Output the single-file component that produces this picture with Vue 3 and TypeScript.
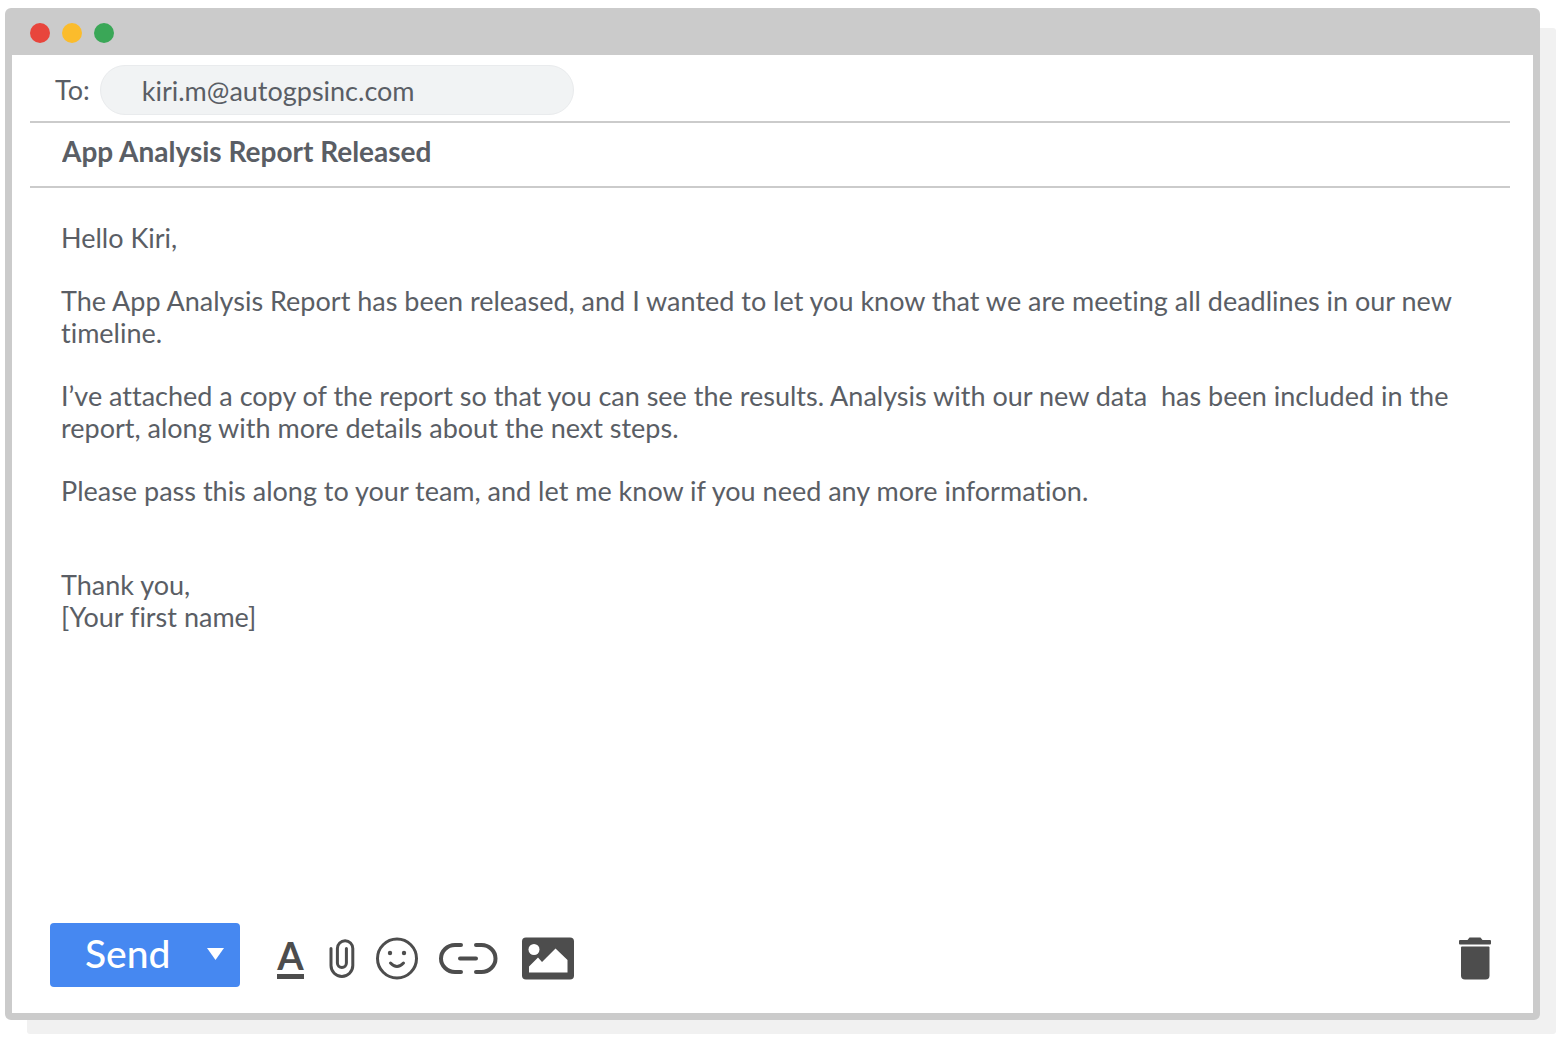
<script setup lang="ts">
import { ref } from 'vue'

const recipient = ref('kiri.m@autogpsinc.com')
const subject = ref('App Analysis Report Released')

const paragraphs: string[] = [
  'Hello Kiri,',
  'The App Analysis Report has been released, and I wanted to let you know that we are meeting all deadlines in our new timeline.',
  'I’ve attached a copy of the report so that you can see the results. Analysis with our new data\u00a0 has been included in the report, along with more details about the next steps.',
  'Please pass this along to your team, and let me know if you need any more information.',
]
</script>

<template>
  <main class="page">
    <form class="window" @submit.prevent>
      <header class="titlebar">
        <span class="dot red"></span>
        <span class="dot yellow"></span>
        <span class="dot green"></span>
      </header>

      <div class="row to-row">
        <label for="to">To:</label>
        <input id="to" v-model="recipient" class="recipient" type="text" />
      </div>
      <div class="row subject-row">
        <input v-model="subject" class="subject" type="text" aria-label="Subject" />
      </div>

      <div class="message" contenteditable="true" role="textbox" aria-multiline="true" aria-label="Message" spellcheck="false">
        <p v-for="text in paragraphs" :key="text">{{ text }}</p>
        <p class="signature">Thank you,<br />[Your first name]</p>
      </div>

      <footer class="toolbar">
        <div class="send-group">
          <button class="send" type="submit">Send</button>
          <button class="more" type="button" aria-label="More send options">
            <svg width="17" height="12" viewBox="0 0 17 12"><path d="M0 0H17L8.500 12Z" fill="#fff" /></svg>
          </button>
        </div>
        <div class="tools">
          <button class="tool format" type="button" aria-label="Formatting options"><span>A</span></button>
          <button class="tool" type="button" aria-label="Attach files">
            <svg width="30" height="44" viewBox="-4 0 30 44" fill="none" stroke="#4d4d4d" stroke-width="3" stroke-linecap="round">
              <path d="M2 11.500V28.500A10.900 10.900 0 0 0 23.800 28.500V11.500A7.700 7.700 0 0 0 8.400 11.500V26A4.500 4.500 0 0 0 17.400 26V11.500" />
            </svg>
          </button>
          <button class="tool" type="button" aria-label="Insert emoji">
            <svg width="44" height="44" viewBox="0 0 44 44" fill="none" stroke="#4d4d4d" stroke-width="3" stroke-linecap="round">
              <circle cx="22" cy="21.500" r="19.500" />
              <path d="M15.500 26Q22 33 28.500 26" />
              <circle cx="15" cy="16" r="2.200" fill="#4d4d4d" stroke="none" />
              <circle cx="29" cy="16" r="2.200" fill="#4d4d4d" stroke="none" />
            </svg>
          </button>
          <button class="tool" type="button" aria-label="Insert link">
            <svg width="59" height="44" viewBox="1 0 59 44" fill="none" stroke="#4d4d4d" stroke-width="4" stroke-linecap="round">
              <path d="M23 8H17A14 13.500 0 0 0 17 35H23M38 8H43.500A14 13.500 0 0 1 43.500 35H38M22 21.500H38" />
            </svg>
          </button>
          <button class="tool" type="button" aria-label="Insert photo">
            <svg width="57" height="44" viewBox="-3 0 57 44">
              <rect x="1" y="0.500" width="52" height="42" rx="4" fill="#4d4d4d" />
              <circle cx="13" cy="12.500" r="5.500" fill="#fff" />
              <path d="M8 35.500V29.500L17 20.500L21 25L34.500 11.500L46.500 23V35.500Z" fill="#fff" />
            </svg>
          </button>
        </div>
        <button class="tool trash" type="button" aria-label="Discard draft">
          <svg width="34" height="44" viewBox="0 0 34 44" fill="#4d4d4d">
            <path d="M2 3H9.500L11.500 0.500H22.500L24.500 3H32A1 1 0 0 1 33 4V6.500A1 1 0 0 1 32 7.500H2A1 1 0 0 1 1 6.500V4A1 1 0 0 1 2 3Z" />
            <path d="M4 9.500H30.500A1 1 0 0 1 31.500 10.500V38.500A4 4 0 0 1 27.500 42.500H7A4 4 0 0 1 3 38.500V10.500A1 1 0 0 1 4 9.500Z" />
          </svg>
        </button>
      </footer>
    </form>
  </main>
</template>

<style>
body {
  margin: 0;
  background: #fff;
}
</style>

<style scoped>
.page {
  box-sizing: border-box;
  display: flex;
  flex-direction: column;
  min-height: 100vh;
  padding: 8px 25px 22px 5px;
  font-family: Lato, 'Liberation Sans', sans-serif;
  font-size: 27px;
  line-height: 32px;
  font-variant-ligatures: none;
  color: #5a5e65;
}

.window {
  flex: 1;
  display: flex;
  flex-direction: column;
  border: 7px solid #cbcbcb;
  border-radius: 6px;
  background: #fff;
  box-shadow: 19px 17px 0 -3px #f1f1f1;
}

.titlebar {
  display: flex;
  align-items: center;
  gap: 12px;
  height: 40px;
  padding: 0 18px 5px;
  box-sizing: border-box;
  background: #cbcbcb;
}

.dot {
  width: 20px;
  height: 20px;
  border-radius: 50%;
}

.red { background: #e8453c; }
.yellow { background: #fbbc2c; }
.green { background: #3aa757; }

.row {
  display: flex;
  align-items: center;
  margin: 0 23px 0 18px;
  border-bottom: 2px solid #cbcbcb;
}

input,
button {
  margin: 0;
  border: 0;
  background: none;
  font: inherit;
  color: inherit;
  outline: none;
}

.to-row {
  gap: 10px;
  padding: 10px 0 6px 25px;
}

.recipient {
  box-sizing: border-box;
  flex: 0 1 474px;
  min-width: 0;
  height: 50px;
  padding: 0 41px;
  border: 1px solid #e9ebed;
  border-radius: 25px;
  background: #f1f3f4;
}

.subject-row {
  padding: 11px 0 19px;
}

.subject {
  flex: 1;
  min-width: 0;
  height: 33px;
  padding: 0 32px;
  font-size: 28px;
  font-weight: 700;
}

.message {
  flex: 1;
  padding: 34px 80px 32px 49px;
  outline: none;
}

.message p {
  margin: 0 0 31px;
}

.message .signature {
  margin: 62px 0 0;
}

.toolbar {
  display: flex;
  align-items: center;
  gap: 37px;
  padding: 0 41px 26px 38px;
}

.send-group {
  display: flex;
  height: 64px;
  border-radius: 4px;
  background: #4688f1;
  color: #fff;
}

.send {
  padding: 0 20px 4px 35px;
  font-size: 39px;
  font-weight: 500;
}

.more {
  display: flex;
  align-items: center;
  padding: 0 16px 2px;
}

.tools {
  display: flex;
  align-items: center;
  gap: 20px;
  padding-top: 8px;
}

.tool {
  display: flex;
  padding: 0;
}

.format {
  justify-content: center;
  width: 28px;
  padding-bottom: 2px;
  font-size: 38px;
  font-weight: 700;
  line-height: 37px;
  color: #4d4d4d;
}

.format span {
  border-bottom: 5px solid #4d4d4d;
}

.trash {
  margin-left: auto;
  padding-top: 8px;
}

button {
  cursor: pointer;
}
</style>
